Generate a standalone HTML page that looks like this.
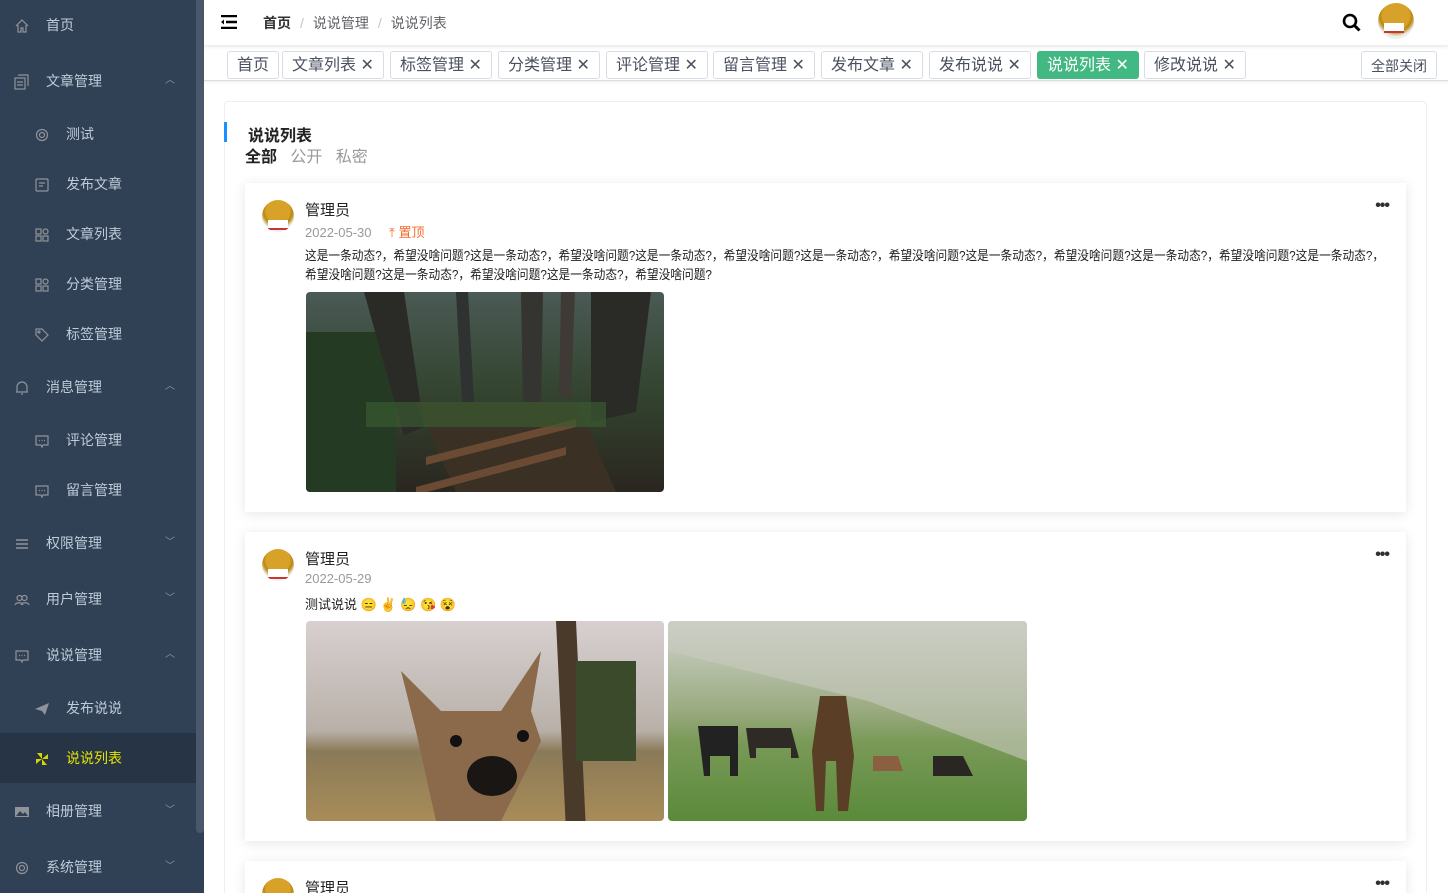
<!DOCTYPE html>
<html style="overflow:hidden"><head><meta charset="utf-8">
<style>
*{box-sizing:border-box;margin:0;padding:0}
html,body{width:1448px;height:893px;overflow:hidden}
body{font-family:"Liberation Sans","Noto Sans CJK SC",sans-serif;background:#fff;position:relative;color:#303133}
.side{position:absolute;left:0;top:0;width:204px;height:893px;background:#304156}
.sb{position:absolute;left:196px;top:0;width:8px;height:833px;background:#4b586b;border-radius:0 0 4px 4px}
.it{position:absolute;left:0;width:196px;height:50px;color:#bfcbd9;font-size:14px;line-height:50px}
.it .t{position:absolute;left:46px}
.it.sub .t{left:66px}
.it .ic{position:absolute;left:14px;top:18px;width:16px;height:16px}
.it.sub .ic{left:34px}
.it .ar{position:absolute;left:165px;top:0;font-size:10px;color:#909399}
.act{background:#263445;color:#e4e400}
.hdr{position:absolute;left:204px;top:0;right:0;height:46px;border-bottom:1px solid #eee;box-shadow:0 1px 4px rgba(0,21,41,.08)}
.bc{position:absolute;left:59px;top:13px;font-size:14px;color:#606266}
.bc b{color:#303133}
.bc i{font-style:normal;color:#c0c4cc;margin:0 9px}
.tags{position:absolute;left:204px;top:47px;right:0;height:34px;border-bottom:1px solid #d8dce5;box-shadow:0 1px 3px rgba(0,0,0,.08)}
.tg{position:absolute;top:4px;height:28px;border:1px solid #d8dce5;border-radius:3px;font-size:16px;line-height:28px;padding:0 9px;color:#495060;background:#fff;white-space:nowrap}
.tg.on{background:#42b983;border-color:#42b983;color:#fff}
.wrap{position:absolute;left:224px;top:101px;width:1203px;height:820px;border:1px solid #ebeef5;border-radius:4px}
.card{position:absolute;left:245px;width:1161px;background:#fff;box-shadow:0 2px 12px rgba(0,0,0,.1)}
.av{position:absolute;left:17px;top:17px;width:32px;height:32px;border-radius:50%;background:radial-gradient(circle at 50% 35%,#d8a22a 0 45%,#b8860b 55%,#eee 70%);overflow:hidden}
.av:after{content:"";position:absolute;left:6px;top:20px;width:20px;height:8px;background:#fff;border-bottom:2px solid #c33}
.nm{position:absolute;left:60px;top:16px;font-size:15px;color:#222}
.dt{position:absolute;left:60px;top:39px;font-size:13px;color:#999}
.tx{position:absolute;left:60px;top:63px;font-size:13px;line-height:19px;color:#222;white-space:nowrap}
.dots{position:absolute;right:17px;top:14px;font-size:16px;font-weight:bold;letter-spacing:-1px}
.img{position:absolute;border-radius:4px;overflow:hidden}
</style></head><body>
<div class="side">
<div class="it" style="top:0"><svg class="ic" viewBox="0 0 16 16" fill="none" stroke="#909399" stroke-width="1.2"><path d="M2 8L8 2l6 6M4 7v7h3v-4h2v4h3V7"/></svg><span class="t">首页</span></div>
<div class="it" style="top:56px"><svg class="ic" viewBox="0 0 16 16" fill="none" stroke="#909399" stroke-width="1.2"><rect x="1" y="4" width="10" height="11"/><path d="M4 1h10v11M3 8h6M3 11h6"/></svg><span class="t">文章管理</span><span class="ar">︿</span></div>
<div class="it sub" style="top:109px"><svg class="ic" viewBox="0 0 16 16" fill="none" stroke="#909399" stroke-width="1.2"><circle cx="8" cy="8" r="5.5"/><circle cx="8" cy="8" r="2.5"/></svg><span class="t">测试</span></div>
<div class="it sub" style="top:159px"><svg class="ic" viewBox="0 0 16 16" fill="none" stroke="#909399" stroke-width="1.2"><rect x="2" y="2" width="12" height="12" rx="1"/><path d="M5 6h6M5 9h4"/></svg><span class="t">发布文章</span></div>
<div class="it sub" style="top:209px"><svg class="ic" viewBox="0 0 16 16" fill="none" stroke="#909399" stroke-width="1.2"><rect x="2" y="2" width="5" height="5"/><rect x="9" y="2" width="5" height="5" rx="2.5"/><rect x="2" y="9" width="5" height="5"/><rect x="9" y="9" width="5" height="5"/></svg><span class="t">文章列表</span></div>
<div class="it sub" style="top:259px"><svg class="ic" viewBox="0 0 16 16" fill="none" stroke="#909399" stroke-width="1.2"><rect x="2" y="2" width="5" height="5"/><rect x="9" y="2" width="5" height="5" rx="2.5"/><rect x="2" y="9" width="5" height="5"/><rect x="9" y="9" width="5" height="5"/></svg><span class="t">分类管理</span></div>
<div class="it sub" style="top:309px"><svg class="ic" viewBox="0 0 16 16" fill="none" stroke="#909399" stroke-width="1.2"><path d="M2 2h6l6 6-6 6-6-6z"/><circle cx="5" cy="5" r="1"/></svg><span class="t">标签管理</span></div>
<div class="it" style="top:362px"><svg class="ic" viewBox="0 0 16 16" fill="none" stroke="#909399" stroke-width="1.2"><path d="M3 12V7a5 5 0 0110 0v5zM2 12h12M7 14h2"/></svg><span class="t">消息管理</span><span class="ar">︿</span></div>
<div class="it sub" style="top:415px"><svg class="ic" viewBox="0 0 16 16" fill="none" stroke="#909399" stroke-width="1.2"><path d="M2 3h12v9H9l-1 2-1-2H2z"/><path d="M5 7.5h1M7.5 7.5h1M10 7.5h1"/></svg><span class="t">评论管理</span></div>
<div class="it sub" style="top:465px"><svg class="ic" viewBox="0 0 16 16" fill="none" stroke="#909399" stroke-width="1.2"><path d="M2 3h12v9H9l-1 2-1-2H2z"/><path d="M5 7.5h1M7.5 7.5h1M10 7.5h1"/></svg><span class="t">留言管理</span></div>
<div class="it" style="top:518px"><svg class="ic" viewBox="0 0 16 16" fill="none" stroke="#909399" stroke-width="1.4"><path d="M2 4h12M2 8h12M2 12h12"/></svg><span class="t">权限管理</span><span class="ar">﹀</span></div>
<div class="it" style="top:574px"><svg class="ic" viewBox="0 0 16 16" fill="none" stroke="#909399" stroke-width="1.2"><circle cx="5.5" cy="6" r="2.5"/><circle cx="10.5" cy="6" r="2.5"/><path d="M1 13c1-3 7-3 8 0M7 13c1-3 7-3 8 0"/></svg><span class="t">用户管理</span><span class="ar">﹀</span></div>
<div class="it" style="top:630px"><svg class="ic" viewBox="0 0 16 16" fill="none" stroke="#909399" stroke-width="1.2"><path d="M2 3h12v9H9l-1 2-1-2H2z"/><path d="M5 7.5h1M7.5 7.5h1M10 7.5h1"/></svg><span class="t">说说管理</span><span class="ar">︿</span></div>
<div class="it sub" style="top:683px"><svg class="ic" viewBox="0 0 16 16"><path d="M1 8L15 2 11 14 8 10z" fill="#909399"/></svg><span class="t">发布说说</span></div>
<div class="it sub act" style="top:733px"><svg class="ic" viewBox="0 0 16 16" fill="#d4d400"><path d="M8 8L3 2h5zM8 8l6-5v5zM8 8l5 6H8zM8 8l-6 5V8z"/></svg><span class="t">说说列表</span></div>
<div class="it" style="top:786px"><svg class="ic" viewBox="0 0 16 16"><rect x="1" y="3" width="14" height="10" fill="#909399"/><path d="M2 12l4-5 3 3 2-2 3 4z" fill="#304156"/></svg><span class="t">相册管理</span><span class="ar">﹀</span></div>
<div class="it" style="top:842px"><svg class="ic" viewBox="0 0 16 16" fill="none" stroke="#909399" stroke-width="1.2"><circle cx="8" cy="8" r="5.5"/><circle cx="8" cy="8" r="2.5"/></svg><span class="t">系统管理</span><span class="ar">﹀</span></div>
<div class="sb"></div>
</div>

<div class="hdr">
<svg style="position:absolute;left:17px;top:15px" width="16" height="14" viewBox="0 0 16 14"><path d="M0 1h16M5 7h11M0 13h16" stroke="#000" stroke-width="2.4"/><path d="M0 7l3-2.5v5z" fill="#000"/></svg>
<div class="bc"><b>首页</b><i>/</i>说说管理<i>/</i>说说列表</div>
<svg style="position:absolute;left:1138px;top:13px" width="20" height="20" viewBox="0 0 20 20"><circle cx="8" cy="8" r="6" fill="none" stroke="#000" stroke-width="2.6"/><path d="M12.5 12.5l5 5" stroke="#000" stroke-width="3"/></svg>
<div class="av" style="left:1174px;top:3px;width:36px;height:36px"></div>
</div>

<div class="tags">
<div class="tg" style="left:23px">首页</div>
<div class="tg" style="left:78px">文章列表 ✕</div>
<div class="tg" style="left:186px">标签管理 ✕</div>
<div class="tg" style="left:294px">分类管理 ✕</div>
<div class="tg" style="left:402px">评论管理 ✕</div>
<div class="tg" style="left:509px">留言管理 ✕</div>
<div class="tg" style="left:617px">发布文章 ✕</div>
<div class="tg" style="left:725px">发布说说 ✕</div>
<div class="tg on" style="left:833px">说说列表 ✕</div>
<div class="tg" style="left:940px">修改说说 ✕</div>
<div class="tg" style="left:1157px;font-size:14px">全部关闭</div>
</div>

<div class="wrap"></div>
<div style="position:absolute;left:224px;top:122px;width:3px;height:20px;background:#1890ff"></div>
<div style="position:absolute;left:248px;top:122px;font-size:16px;font-weight:bold;color:#222">说说列表</div>
<div style="position:absolute;left:245px;top:143px;font-size:16px;color:#999"><b style="color:#222">全部</b>&nbsp;&nbsp; 公开 &nbsp;&nbsp;私密</div>

<div class="card" style="top:183px;height:329px">
<div class="av"></div><div class="nm">管理员</div>
<div class="dt">2022-05-30 <span style="color:#f56c2d;margin-left:14px">⤒ 置顶</span></div>
<div class="dots">•••</div>
<div class="tx" style="transform:scaleX(0.9);transform-origin:0 0">这是一条动态?，希望没啥问题?这是一条动态?，希望没啥问题?这是一条动态?，希望没啥问题?这是一条动态?，希望没啥问题?这是一条动态?，希望没啥问题?这是一条动态?，希望没啥问题?这是一条动态?，<br>希望没啥问题?这是一条动态?，希望没啥问题?这是一条动态?，希望没啥问题?</div>
<div class="img" style="left:61px;top:109px;width:358px;height:200px">
<svg width="358" height="200" viewBox="0 0 358 200"><defs><linearGradient id="f" x1="0" y1="0" x2="0" y2="1"><stop offset="0" stop-color="#4a5a55"/><stop offset=".5" stop-color="#33442f"/><stop offset="1" stop-color="#2a2620"/></linearGradient></defs>
<rect width="358" height="200" fill="url(#f)"/>
<rect x="0" y="40" width="90" height="160" fill="#243a22"/>
<path d="M58 0h40l20 135-20 8z" fill="#2a2a26"/><path d="M150 0h12l6 110h-12z" fill="#2e3230"/><path d="M215 0h22l-2 115h-18z" fill="#343431"/><path d="M255 0h14l-4 105h-12z" fill="#3f3a36"/>
<path d="M285 0h60l-15 120-45 10z" fill="#2a2b27"/>
<path d="M110 110h160l40 90H150z" fill="#3a3024"/>
<path d="M120 165l150-38v8l-150 38zM110 195l150-40v8l-150 40z" fill="#6a4a32"/>
<rect x="60" y="110" width="240" height="25" fill="#3b5a30" opacity=".7"/>
</svg></div>
</div>

<div class="card" style="top:532px;height:309px">
<div class="av"></div><div class="nm">管理员</div>
<div class="dt">2022-05-29</div>
<div class="dots">•••</div>
<div class="tx" style="top:63px">测试说说 <span style="color:#f5a623">😑 ✌ 😓 😘 😵</span></div>
<div class="img" style="left:61px;top:89px;width:358px;height:200px">
<svg width="358" height="200" viewBox="0 0 358 200"><defs><linearGradient id="d" x1="0" y1="0" x2="0" y2="1"><stop offset="0" stop-color="#d8d0d0"/><stop offset=".55" stop-color="#b8b0a8"/><stop offset=".65" stop-color="#8a7a58"/><stop offset="1" stop-color="#a88c58"/></linearGradient></defs>
<rect width="358" height="200" fill="url(#d)"/>
<path d="M250 0h20l10 210h-20z" fill="#4a3a2a"/><rect x="270" y="40" width="60" height="100" fill="#3a4a2a"/>
<path d="M95 50l40 40h60l40-60-10 60 10 30-40 80H130l-20-90z" fill="#8a6a4a"/>
<ellipse cx="186" cy="155" rx="25" ry="20" fill="#1a1614"/>
<circle cx="150" cy="120" r="6" fill="#111"/><circle cx="217" cy="115" r="6" fill="#111"/>
</svg></div>
<div class="img" style="left:423px;top:89px;width:359px;height:200px">
<svg width="359" height="200" viewBox="0 0 359 200"><defs><linearGradient id="h" x1="0" y1="0" x2="0" y2="1"><stop offset="0" stop-color="#d0d4cc"/><stop offset=".45" stop-color="#9aaa80"/><stop offset=".6" stop-color="#7a9a58"/><stop offset="1" stop-color="#5a8a3a"/></linearGradient></defs>
<rect width="359" height="200" fill="url(#h)"/>
<path d="M0 30L200 80 359 140V0H0z" fill="#c8cac0" opacity=".6"/>
<path d="M30 105h40v50h-8v-20h-20v20h-6z" fill="#222"/><path d="M78 107h45l8 30h-8v-10h-35v10h-6z" fill="#2e2a26"/>
<path d="M152 75h26l8 60-6 55h-10l-2-50h-10l-2 50h-8l-4-60z" fill="#5a3e26"/>
<path d="M265 135h30l10 20h-40z" fill="#2a2624"/><path d="M205 135h25l5 15h-30z" fill="#8a6040"/>
</svg></div>
</div>

<div class="card" style="top:861px;height:40px">
<div class="av"></div><div class="nm">管理员</div>
<div class="dots">•••</div>
</div>
</body></html>
